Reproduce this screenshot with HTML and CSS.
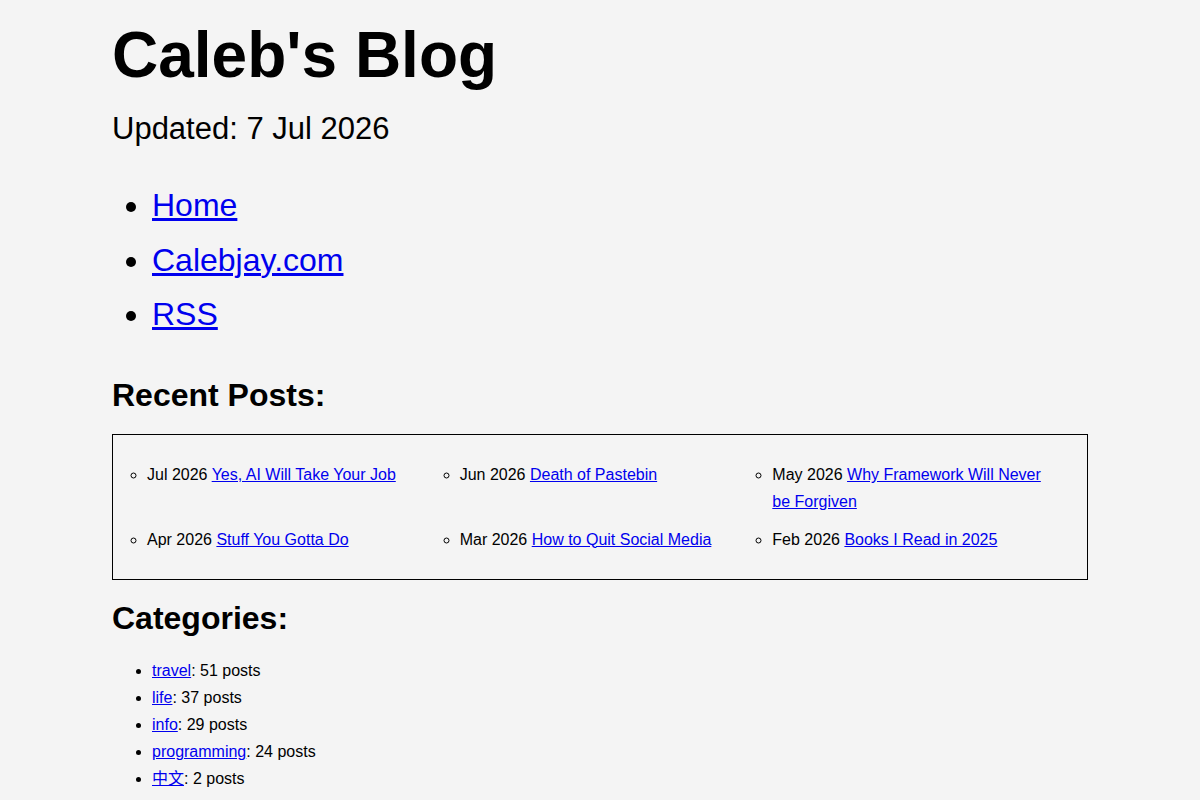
FILE: index.html
```html
<!DOCTYPE html>
<html>
<head>
    <meta charset="UTF-8">
    <title>Caleb's Blog</title>
    <link rel="stylesheet" href="styles.css">
</head>
<body>
    <div class="page">
        <h1 class="title">Caleb's Blog</h1>
        <p class="updated">Updated: 7 Jul 2026</p>

        <ul class="nav">
            <li><a href="#">Home</a></li>
            <li><a href="#">Calebjay.com</a></li>
            <li><a href="#">RSS</a></li>
        </ul>

        <h2>Recent Posts:</h2>
        <div class="recent">
            <ul class="recent-list">
                <li>Jul 2026 <a href="#">Yes, AI Will Take Your Job</a></li>
                <li>Jun 2026 <a href="#">Death of Pastebin</a></li>
                <li>May 2026 <a href="#">Why Framework Will Never be Forgiven</a></li>
                <li>Apr 2026 <a href="#">Stuff You Gotta Do</a></li>
                <li>Mar 2026 <a href="#">How to Quit Social Media</a></li>
                <li>Feb 2026 <a href="#">Books I Read in 2025</a></li>
            </ul>
        </div>

        <h2>Categories:</h2>
        <ul class="categories">
            <li><a href="#">travel</a>: 51 posts</li>
            <li><a href="#">life</a>: 37 posts</li>
            <li><a href="#">info</a>: 29 posts</li>
            <li><a href="#">programming</a>: 24 posts</li>
            <li><a href="#">中文</a>: 2 posts</li>
        </ul>
    </div>
</body>
</html>
```

FILE: styles.css
```css
/* blog index */
:root {
    --background: #f4f4f4;
    --text: #000000;
    --link: #0000ee;
}

body {
    margin: 0;
    background: var(--background);
    color: var(--text);
    font-family: "Liberation Sans", Arial, "Noto Sans CJK SC", sans-serif;
    font-size: 16px;
    line-height: 1.7;
}

.page {
    max-width: 976px;
    margin: 0 auto;
    padding-top: 19px;
}

a {
    color: var(--link);
}

.title {
    font-size: 64px;
    line-height: 1.15;
    margin: 0;
}

.updated {
    font-size: 31px;
    line-height: 1.15;
    margin: 18px 0 0;
}

.nav {
    font-size: 32px;
    margin: 32px 0 36px;
    padding-left: 40px;
}

h2 {
    font-size: 32px;
    line-height: 1.15;
    margin: 20px 0;
}

.recent {
    border: 1px solid #000;
    padding: 26px 32px 26px 34px;
}

.recent-list {
    display: grid;
    grid-template-columns: repeat(3, 1fr);
    column-gap: 30px;
    row-gap: 10px;
    list-style: circle;
    margin: 0;
    padding: 0;
}

.categories {
    margin: 20px 0 0;
    padding-left: 40px;
}
```
